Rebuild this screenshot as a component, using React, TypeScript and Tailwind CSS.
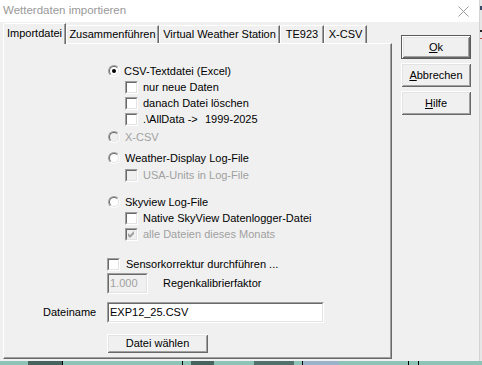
import React from "react";

const F = "font-['Liberation_Sans',Arial,sans-serif]";

function Radio({ checked = false, disabled = false }: { checked?: boolean; disabled?: boolean }) {
  return (
    <div className="w-[12px] h-[12px] shrink-0 rounded-full border border-t-[#a0a0a0] border-l-[#a0a0a0] border-b-white border-r-white">
      <div
        className={`w-full h-full rounded-full border border-t-[#696969] border-l-[#696969] border-b-[#e3e3e3] border-r-[#e3e3e3] flex items-center justify-center ${
          disabled ? "bg-[#f0f0f0]" : "bg-white"
        }`}
      >
        {checked && <div className="w-[4px] h-[4px] rounded-full bg-black" />}
      </div>
    </div>
  );
}

function Check({ checked = false, disabled = false }: { checked?: boolean; disabled?: boolean }) {
  return (
    <div className="w-[13px] h-[13px] shrink-0 border border-t-[#a0a0a0] border-l-[#a0a0a0] border-b-white border-r-white">
      <div
        className={`w-full h-full border border-t-[#696969] border-l-[#696969] border-b-[#e3e3e3] border-r-[#e3e3e3] flex items-center justify-center ${
          disabled ? "bg-[#f0f0f0]" : "bg-white"
        }`}
      >
        {checked && (
          <svg width="7" height="7" viewBox="0 0 7 7">
            <path d="M0 2 L2 4 L6 0 L6 3 L2 7 L0 5 Z" fill={disabled ? "#a0a0a0" : "#000"} />
          </svg>
        )}
      </div>
    </div>
  );
}

function Row({ children, className = "" }: { children: React.ReactNode; className?: string }) {
  return <div className={`flex items-center h-[16px] gap-[5px] ${className}`}>{children}</div>;
}

const btn =
  "flex items-center justify-center bg-[#f0f0f0] text-black shadow-[inset_1px_1px_0_#ffffff,inset_-1px_-1px_0_#696969,inset_2px_2px_0_#e3e3e3,inset_-2px_-2px_0_#a0a0a0]";

function Tab({ label, w }: { label: string; w: number }) {
  return (
    <div
      style={{ width: w }}
      className="h-[18px] flex items-center justify-center border-l border-t border-white rounded-tl-[2px] border-r border-r-[#696969] shadow-[inset_-1px_0_0_#a0a0a0] text-black"
    >
      {label}
    </div>
  );
}

export default function App() {
  return (
    <div className={`${F} text-[11px] w-[482px] h-[365px] overflow-hidden bg-[#8ec3b8] flex flex-col`}>
      <div className="flex h-[361px]">
        <div className="w-[480px] h-[361px] bg-[#f0f0f0] border-r border-[#d4d4d4] flex flex-col">
          {/* title bar */}
          <div className="h-[22px] bg-white flex items-center justify-between pl-[3px] pr-[10px]">
            <span className="text-[11.5px] text-[#999999]">Wetterdaten importieren</span>
            <svg width="11" height="11" viewBox="0 0 11 11">
              <path d="M0.5 0.5 L10.5 10.5 M10.5 0.5 L0.5 10.5" stroke="#9a9a9a" strokeWidth="1" />
            </svg>
          </div>
          {/* body */}
          <div className="flex pl-[3px] pt-[1px]">
            <div className="flex flex-col w-[389px]">
              <div className="flex items-end h-[20px]">
                <div className="relative z-10 -mb-[1px] h-[21px] w-[63px] bg-[#f0f0f0] flex items-center justify-center pb-[2px] border-l border-t border-white rounded-tl-[2px] border-r border-r-[#696969] shadow-[inset_-1px_0_0_#a0a0a0] text-black">
                  Importdatei
                </div>
                <Tab label="Zusammenführen" w={93} />
                <Tab label="Virtual Weather Station" w={121} />
                <Tab label="TE923" w={44} />
                <Tab label="X-CSV" w={43} />
              </div>
              <div className="w-[389px] h-[316px] border-l border-t border-white border-r border-b border-r-[#696969] border-b-[#696969] shadow-[inset_-1px_-1px_0_#a0a0a0] flex flex-col pt-[19px] text-black">
                <Row className="ml-[104px] h-[14px]">
                  <Radio checked />
                  <span className="ml-[-1px]">CSV-Textdatei (Excel)</span>
                </Row>
                <Row className="ml-[121px]">
                  <Check />
                  <span>nur neue Daten</span>
                </Row>
                <Row className="ml-[121px]">
                  <Check />
                  <span>danach Datei löschen</span>
                </Row>
                <Row className="ml-[121px]">
                  <Check />
                  <span className="w-[57px]">.\AllData -&gt;</span>
                  <span>1999-2025</span>
                </Row>
                <Row className="ml-[104px] mt-[2px]">
                  <Radio disabled />
                  <span className="text-[#a0a0a0]">X-CSV</span>
                </Row>
                <Row className="ml-[104px] mt-[5px]">
                  <Radio />
                  <span>Weather-Display Log-File</span>
                </Row>
                <Row className="ml-[121px] mt-[1px]">
                  <Check disabled />
                  <span className="text-[#a0a0a0]">USA-Units in Log-File</span>
                </Row>
                <Row className="ml-[104px] mt-[11px]">
                  <Radio />
                  <span>Skyview Log-File</span>
                </Row>
                <Row className="ml-[121px]">
                  <Check />
                  <span>Native SkyView Datenlogger-Datei</span>
                </Row>
                <Row className="ml-[121px]">
                  <Check checked disabled />
                  <span className="text-[#a0a0a0]">alle Dateien dieses Monats</span>
                </Row>
                <Row className="ml-[103px] mt-[14px]">
                  <Check />
                  <span className="ml-[1px]">Sensorkorrektur durchführen ...</span>
                </Row>
                <div className="flex items-center ml-[103px] mt-[1px] h-[21px]">
                  <div className="w-[41px] h-[21px] bg-[#f0f0f0] border border-t-[#a0a0a0] border-l-[#a0a0a0] border-b-white border-r-white">
                    <div className="w-full h-full border border-t-[#696969] border-l-[#696969] border-b-[#e3e3e3] border-r-[#e3e3e3] flex items-center pl-[1px] text-[#a0a0a0]">
                      1.000
                    </div>
                  </div>
                  <span className="ml-[15px]">Regenkalibrierfaktor</span>
                </div>
                <div className="flex items-center ml-[39px] mt-[8px] h-[21px]">
                  <span className="w-[64px]">Dateiname</span>
                  <div className="w-[217px] h-[21px] bg-white border border-t-[#a0a0a0] border-l-[#a0a0a0] border-b-white border-r-white">
                    <div className="w-full h-full border border-t-[#696969] border-l-[#696969] border-b-[#e3e3e3] border-r-[#e3e3e3] flex items-center pl-[1px]">
                      EXP12_25.CSV
                    </div>
                  </div>
                </div>
                <div className={`${btn} ml-[103px] mt-[11px] w-[101px] h-[19px]`}>Datei wählen</div>
              </div>
            </div>
            <div className="flex flex-col ml-[9px] pt-[12px] gap-[4px] w-[70px]">
              <div className="h-[24px] border border-[#5a5a5a]">
                <div className={`${btn} w-full h-full`}>
                  <span>
                    <span className="underline underline-offset-[1px]">O</span>k
                  </span>
                </div>
              </div>
              <div className={`${btn} h-[24px]`}>
                <span>
                  <span className="underline underline-offset-[1px]">A</span>bbrechen
                </span>
              </div>
              <div className={`${btn} h-[24px]`}>
                <span>
                  <span className="underline underline-offset-[1px]">H</span>ilfe
                </span>
              </div>
            </div>
          </div>
        </div>
        <div className="w-[2px] h-full bg-[#e6e6e6] flex flex-col">
          <div className="h-[6px]" />
          <div className="h-[4px] bg-[#3a4a6a]" />
          <div className="h-[20px]" />
          <div className="h-[2px] bg-[#222]" />
          <div className="h-[6px]" />
          <div className="h-[1px] bg-[#c0504d]" />
        </div>
      </div>
      <div className="flex-1 flex items-stretch">
        <div className="w-[28px]" />
        <div className="w-[34px] bg-[#2a3a38] opacity-70" />
        <div className="w-[1px] bg-black" />
        <div className="w-[119px]" />
        <div className="w-[1px] bg-black" />
        <div className="w-[8px]" />
        <div className="w-[23px] bg-[#2a3a38] opacity-70" />
        <div className="w-[40px]" />
        <div className="w-[40px] bg-[#2a3a38] opacity-60" />
        <div className="w-[8px]" />
        <div className="w-[1px] bg-black" />
        <div className="w-[36px] bg-[#9bb3c9]" />
        <div className="w-[69px]" />
        <div className="w-[1px] bg-black" />
        <div className="w-[9px]" />
        <div className="w-[1px] bg-black" />
      </div>
    </div>
  );
}
